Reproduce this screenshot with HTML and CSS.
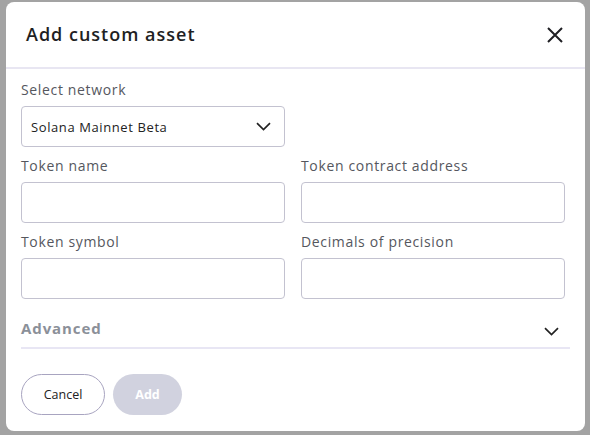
FILE: index.html
```html
<!DOCTYPE html>
<html lang="en">
<head>
<meta charset="utf-8">
<title>Add custom asset</title>
<link rel="stylesheet" href="styles.css">
</head>
<body>
<div class="modal">
  <div class="modal-header">
    <h2 class="modal-title">Add custom asset</h2>
    <button class="close-btn" aria-label="Close">
      <svg width="16" height="16" viewBox="0 0 16 16"><path d="M1 1 L15 15 M15 1 L1 15" stroke="#1f1f23" stroke-width="2" fill="none"/></svg>
    </button>
  </div>
  <div class="modal-body">
    <div class="grid">
      <div class="field">
        <label class="label">Select network</label>
        <div class="select">
          <span>Solana Mainnet Beta</span>
          <svg width="15" height="9" viewBox="0 0 15 9"><path d="M1 1.2 L7.5 7.5 L14 1.2" stroke="#222" stroke-width="1.7" fill="none"/></svg>
        </div>
      </div>
      <div></div>
      <div class="field">
        <label class="label">Token name</label>
        <div class="input"></div>
      </div>
      <div class="field">
        <label class="label">Token contract address</label>
        <div class="input"></div>
      </div>
      <div class="field">
        <label class="label">Token symbol</label>
        <div class="input"></div>
      </div>
      <div class="field">
        <label class="label">Decimals of precision</label>
        <div class="input"></div>
      </div>
    </div>
    <div class="advanced">
      <span class="advanced-title">Advanced</span>
      <svg width="15" height="9" viewBox="0 0 15 9"><path d="M1 1.2 L7.5 7.5 L14 1.2" stroke="#222" stroke-width="1.7" fill="none"/></svg>
    </div>
    <div class="actions">
      <button class="btn btn-outline">Cancel</button>
      <button class="btn btn-disabled">Add</button>
    </div>
  </div>
</div>
</body>
</html>
```
FILE: styles.css
```css
* { box-sizing: border-box; }
html, body { margin: 0; }
body {
  width: 590px;
  height: 435px;
  background: #a3a3a3;
  padding: 2px 5px 4px 6px;
  font-family: "Open Sans", "Liberation Sans", sans-serif;
  color: #222;
}
.modal {
  background: #fff;
  border-radius: 8px;
  height: 429px;
  display: flex;
  flex-direction: column;
}
.modal-header {
  height: 67px;
  border-bottom: 2px solid #e8e6f2;
  display: flex;
  align-items: center;
  justify-content: space-between;
  padding: 0 22px 0 20px;
}
.modal-title {
  margin: 0;
  font-size: 18px;
  font-weight: 600;
  color: #1f1f23;
  letter-spacing: 1px;
  margin-top: -2px;
}
.close-btn {
  border: 0;
  background: none;
  padding: 0;
  display: flex;
  margin-top: 1px;
}
.modal-body {
  padding: 11px 15px 16px 15px;
  display: flex;
  flex-direction: column;
  flex: 1;
}
.grid {
  display: grid;
  grid-template-columns: 264px 264px;
  column-gap: 16px;
  row-gap: 9px;
}
.field { display: flex; flex-direction: column; }
.label {
  font-size: 14px;
  line-height: 20px;
  color: #55575e;
  margin-bottom: 6px;
  letter-spacing: 0.65px;
}
.select, .input {
  height: 41px;
  border: 1px solid #c3c2d0;
  border-radius: 4px;
}
.select {
  display: flex;
  align-items: center;
  justify-content: space-between;
  padding: 0 13px 0 9px;
  font-size: 13px;
  letter-spacing: 0.6px;
  color: #222;
}
.advanced {
  margin-top: 19px;
  height: 31px;
  border-bottom: 2px solid #e8e6f4;
  display: flex;
  align-items: flex-start;
  justify-content: space-between;
  padding-right: 11px;
}
.advanced-title {
  font-size: 15px;
  line-height: 20px;
  font-weight: 700;
  color: #8b9099;
  letter-spacing: 0.9px;
}
.advanced svg { margin-top: 9px; }
.actions {
  margin-top: auto;
  display: flex;
  gap: 8px;
}
.btn {
  height: 41px;
  border-radius: 21px;
  font-family: "Open Sans", "Liberation Sans", sans-serif;
  font-size: 12.5px;
}
.btn-outline {
  width: 84px;
  background: #fff;
  border: 1px solid #a8a4c0;
  color: #222;
}
.btn-disabled {
  width: 69px;
  background: #d1d2df;
  border: 0;
  color: #fff;
  font-weight: 700;
}
```
